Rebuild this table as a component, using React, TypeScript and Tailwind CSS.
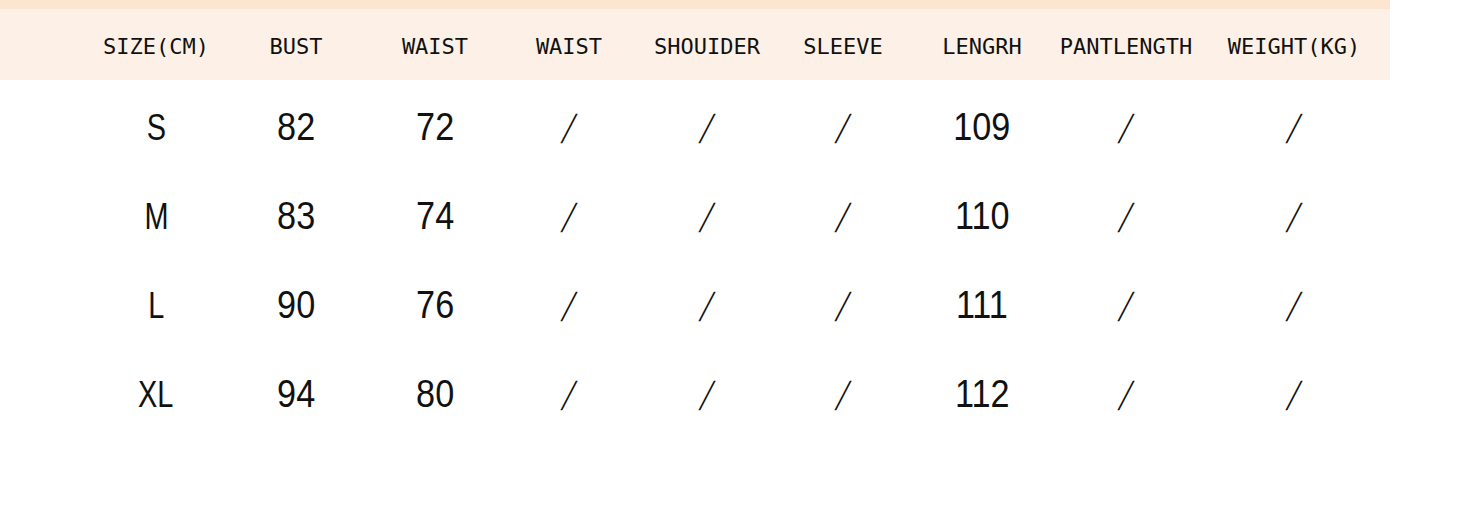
const headers = ['SIZE(CM)', 'BUST', 'WAIST', 'WAIST', 'SHOUIDER', 'SLEEVE', 'LENGRH', 'PANTLENGTH', 'WEIGHT(KG)'];

const rows = [
  ['S', '82', '72', '/', '/', '/', '109', '/', '/'],
  ['M', '83', '74', '/', '/', '/', '110', '/', '/'],
  ['L', '90', '76', '/', '/', '/', '111', '/', '/'],
  ['XL', '94', '80', '/', '/', '/', '112', '/', '/'],
];

const cols = 'grid grid-cols-[140px_140px_138px_130px_146px_126px_152px_136px_200px] pl-[86px]';

export default function App() {
  return (
    <div className="w-[1476px] h-[508px] bg-white overflow-hidden">
      <div className="w-[1390px]">
        <div className="h-[9px] bg-[#fde6cf]" />
        <div className={`${cols} h-[71px] pt-[3px] items-center bg-[#fdf1e7] font-['DejaVu_Sans_Mono',monospace] text-[22px] text-[#111]`}>
          {headers.map((h, i) => (
            <div key={i} className="text-center whitespace-nowrap">{h}</div>
          ))}
        </div>
      </div>

      {/* size rows */}
      <div className="mt-[3px]">
        {rows.map((r, ri) => (
          <div key={ri} className={`${cols} h-[89px] items-center font-['Liberation_Sans',sans-serif] text-[#111]`}>
            {r.map((c, ci) => (
              <div key={ci} className="flex justify-center">
                {ci === 0 ? (
                  <span className="text-[37px] scale-x-[0.78] inline-block">{c}</span>
                ) : c === '/' ? (
                  <span className="text-[36px] font-['DejaVu_Sans',sans-serif] font-extralight -skew-x-12 inline-block">{c}</span>
                ) : (
                  <span className="text-[38px] scale-x-[0.9] inline-block">{c}</span>
                )}
              </div>
            ))}
          </div>
        ))}
      </div>
    </div>
  );
}
